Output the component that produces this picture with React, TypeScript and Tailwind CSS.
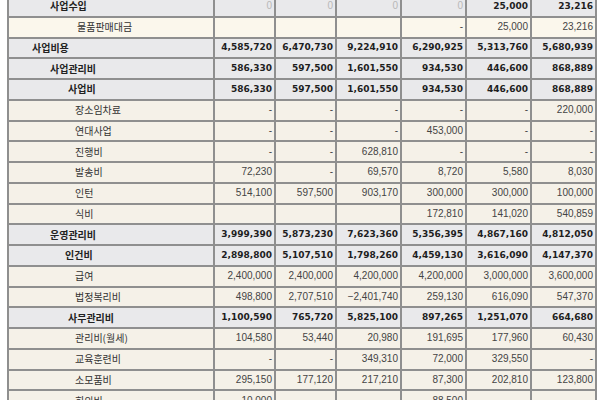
type Kind = 'title' | 'sub' | 'item'

interface Row {
  label: string
  kind: Kind
  indent: string
  values: string[]
}

const ROWS: Row[] = [
  { label: '사업수입', kind: 'title', indent: 'pl-[41px]', values: ['0', '0', '0', '0', '25,000', '23,216'] },
  { label: '물품판매대금', kind: 'sub', indent: 'pl-[68px]', values: ['', '', '', '-', '25,000', '23,216'] },
  { label: '사업비용', kind: 'title', indent: 'pl-[23px]', values: ['4,585,720', '6,470,730', '9,224,910', '6,290,925', '5,313,760', '5,680,939'] },
  { label: '사업관리비', kind: 'title', indent: 'pl-[41px]', values: ['586,330', '597,500', '1,601,550', '934,530', '446,600', '868,889'] },
  { label: '사업비', kind: 'title', indent: 'pl-[59px]', values: ['586,330', '597,500', '1,601,550', '934,530', '446,600', '868,889'] },
  { label: '장소임차료', kind: 'item', indent: 'pl-[66px]', values: ['-', '-', '-', '-', '-', '220,000'] },
  { label: '연대사업', kind: 'item', indent: 'pl-[66px]', values: ['-', '-', '-', '453,000', '-', '-'] },
  { label: '진행비', kind: 'item', indent: 'pl-[66px]', values: ['-', '-', '628,810', '-', '-', '-'] },
  { label: '발송비', kind: 'item', indent: 'pl-[66px]', values: ['72,230', '-', '69,570', '8,720', '5,580', '8,030'] },
  { label: '인턴', kind: 'item', indent: 'pl-[66px]', values: ['514,100', '597,500', '903,170', '300,000', '300,000', '100,000'] },
  { label: '식비', kind: 'item', indent: 'pl-[66px]', values: ['', '', '', '172,810', '141,020', '540,859'] },
  { label: '운영관리비', kind: 'title', indent: 'pl-[41px]', values: ['3,999,390', '5,873,230', '7,623,360', '5,356,395', '4,867,160', '4,812,050'] },
  { label: '인건비', kind: 'title', indent: 'pl-[56px]', values: ['2,898,800', '5,107,510', '1,798,260', '4,459,130', '3,616,090', '4,147,370'] },
  { label: '급여', kind: 'item', indent: 'pl-[66px]', values: ['2,400,000', '2,400,000', '4,200,000', '4,200,000', '3,000,000', '3,600,000'] },
  { label: '법정복리비', kind: 'item', indent: 'pl-[66px]', values: ['498,800', '2,707,510', '−2,401,740', '259,130', '616,090', '547,370'] },
  { label: '사무관리비', kind: 'title', indent: 'pl-[59px]', values: ['1,100,590', '765,720', '5,825,100', '897,265', '1,251,070', '664,680'] },
  { label: '관리비(월세)', kind: 'item', indent: 'pl-[66px]', values: ['104,580', '53,440', '20,980', '191,695', '177,960', '60,430'] },
  { label: '교육훈련비', kind: 'item', indent: 'pl-[66px]', values: ['-', '-', '349,310', '72,000', '329,550', '-'] },
  { label: '소모품비', kind: 'item', indent: 'pl-[66px]', values: ['295,150', '177,120', '217,210', '87,300', '202,810', '123,800'] },
  { label: '회의비', kind: 'item', indent: 'pl-[66px]', values: ['10,000', '', '', '88,500', '', ''] },
]

const rowBg: Record<Kind, string> = {
  title: 'bg-[#e9e9eb]',
  sub: 'bg-[#fbf7ec]',
  item: 'bg-[#f5f1e8]',
}

function NumCell({ value, kind }: { value: string; kind: Kind }) {
  const bold = kind === 'title' && value !== '0'
  const tone = value === '0' ? 'text-[#b8b8b8]' : bold ? 'text-[#1e1e1e]' : 'text-[#444]'
  const font = bold
    ? "font-['DejaVu_Sans',sans-serif] font-bold text-[9px]"
    : "font-['Liberation_Sans',sans-serif] text-[10px]"
  return (
    <div className={`${rowBg[kind]} flex items-center justify-end pr-[2px] leading-none ${font} ${tone}`}>
      {value}
    </div>
  )
}

export default function App() {
  return (
    <div className="w-[600px] h-[400px] overflow-hidden bg-white">
      <div className="ml-[7px] mt-[-5px] w-max grid grid-cols-[204px_59px_59px_63px_63px_63px_63px] auto-rows-[18.75px] gap-[2px] p-[2px] bg-[#8f8f8f]">
        {ROWS.map((row) => (
          <div key={row.label} className="contents">
            <div
              className={`${rowBg[row.kind]} ${row.indent} flex items-center leading-none text-[10px] font-['Noto_Sans_CJK_KR',sans-serif] ${
                row.kind === 'title' ? 'font-bold text-[#222]' : 'text-[#333]'
              }`}
            >
              {row.label}
            </div>
            {row.values.map((v, i) => (
              <NumCell key={i} value={v} kind={row.kind} />
            ))}
          </div>
        ))}
      </div>
    </div>
  )
}
